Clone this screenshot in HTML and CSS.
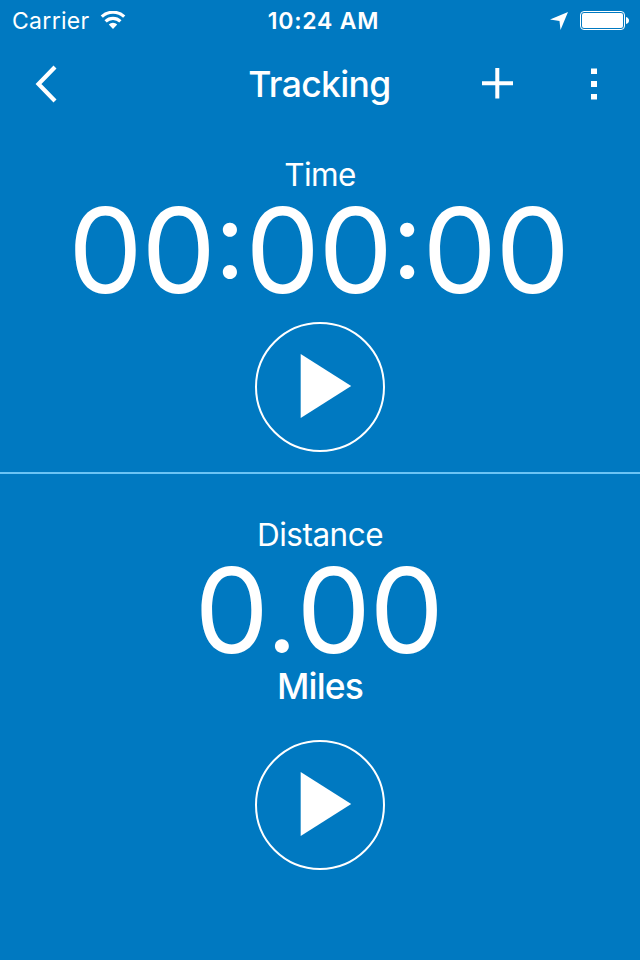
FILE: index.html
```html
<!DOCTYPE html>
<html lang="en">
<head>
<meta charset="utf-8">
<title>Tracking</title>
<link rel="stylesheet" href="styles.css">
</head>
<body>
<header class="status">
  <div class="status-left"><span class="carrier">Carrier</span>
    <svg class="wifi" width="26" height="18" viewBox="0 0 26 18" fill="none" stroke="#fff" stroke-width="3.200"><path d="M1.800 5.700a16.3 16.3 0 0 1 22.400 0M5.600 10.300a10.7 10.7 0 0 1 14.800 0"/><path d="M13 18l-4.200-4.400a5.8 5.8 0 0 1 8.400 0z" fill="#fff" stroke="none"/></svg>
  </div>
  <div class="clock">10:24 AM</div>
  <div class="status-right">
    <svg class="location" width="18" height="18" viewBox="0 0 18 18"><path d="M18 0L10.500 18L9.500 9L0 7.500z" fill="#fff"/></svg>
    <svg width="49" height="19" viewBox="0 0 49 19" fill="#fff"><rect x=".5" y=".5" width="44" height="18" rx="3.5" fill="none" stroke="#fff"/><rect x="2" y="2" width="41" height="15" rx="2"/><path d="M46 6q3 1 3 3.500t-3 3.500z"/></svg>
  </div>
</header>
<nav class="bar">
  <svg class="back" width="24" height="38" viewBox="0 0 24 38" fill="none" stroke="#fff" stroke-width="4.200"><path d="M21 2L4.500 19l16.500 17"/></svg>
  <h1 class="title">Tracking</h1>
  <div class="actions">
    <svg width="32" height="32" viewBox="0 0 32 32" stroke="#fff" stroke-width="4"><path d="M1 15.300h31M16.300 0v30.500"/></svg>
    <svg width="6" height="32" viewBox="0 0 6 32" fill="#fff"><path d="M0 .5h6v5.500H0zM0 13h6v6H0zM0 26h6v5.500H0z"/></svg>
  </div>
</nav>
<main>
  <section class="panel time">
    <h2 class="label label-time">Time</h2>
    <div class="value"><span>00</span><span class="colon">:</span><span>00</span><span class="colon">:</span><span>00</span></div>
    <button class="play" aria-label="Start time"><svg width="130" height="130" viewBox="0 0 130 130"><circle cx="65" cy="65" r="64" fill="none" stroke="#fff" stroke-width="2"/><path d="M45.700 32v64l50.500-32z" fill="#fff"/></svg></button>
  </section>
  <section class="panel distance">
    <h2 class="label">Distance</h2>
    <div class="value"><span>0</span><span class="dot">.</span><span>00</span></div>
    <div class="unit">Miles</div>
    <button class="play" aria-label="Start distance"><svg width="130" height="130" viewBox="0 0 130 130"><circle cx="65" cy="65" r="64" fill="none" stroke="#fff" stroke-width="2"/><path d="M45.700 32v64l50.500-32z" fill="#fff"/></svg></button>
  </section>
</main>
</body>
</html>
```
FILE: styles.css
```css
* { box-sizing: border-box; }
body { margin: 0; width: 640px; height: 960px; overflow: hidden; background: #0079c1; color: #fff; font-family: Inter, sans-serif; }
.status { height: 40px; display: grid; grid-template-columns: 1fr auto 1fr; align-items: center; padding: 0 11px 0 12px; }
.status-left, .status-right { display: flex; align-items: center; gap: 10px; }
.status-right { justify-content: flex-end; gap: 12px; }
.location { margin-top: 2px; }
.carrier { font-size: 23px; letter-spacing: .3px; padding-top: 2px; }
.clock { font-size: 23px; font-weight: 600; letter-spacing: .8px; padding: 2px 0 0 6px; }
.bar { height: 88px; display: grid; grid-template-columns: 1fr auto 1fr; align-items: center; padding: 0 43px 0 34px; }
.title { margin: 0; padding-left: 8px; font-size: 35.5px; font-weight: 500; letter-spacing: -.65px; }
.actions { display: flex; justify-content: flex-end; gap: 78px; }
.panel { display: flex; flex-direction: column; align-items: center; }
.time { height: 346px; padding-top: 26px; border-bottom: 2px solid #6bc4f5; }
.distance { padding-top: 40px; }
.label { margin: 0; height: 40px; line-height: 42px; font-size: 31.5px; font-weight: 400; letter-spacing: -.5px; }
.label-time { line-height: 41px; letter-spacing: -.6px; }
.value { height: 112px; line-height: 113px; font-size: 118px; letter-spacing: -1.4px; display: flex; margin-right: 3px; }
.colon, .dot { display: flex; justify-content: center; letter-spacing: 0; }
.colon { width: 31px; font-size: 107px; line-height: 90px; }
.dot { width: 29px; font-size: 105px; line-height: 120px; }
.unit { height: 42px; line-height: 41px; font-size: 35.5px; font-weight: 500; letter-spacing: -.9px; }
.play { margin: 16px 0 0; padding: 0; border: 0; background: none; height: 130px; }
.distance .play { margin-top: 32px; }
.play svg { display: block; }
```
